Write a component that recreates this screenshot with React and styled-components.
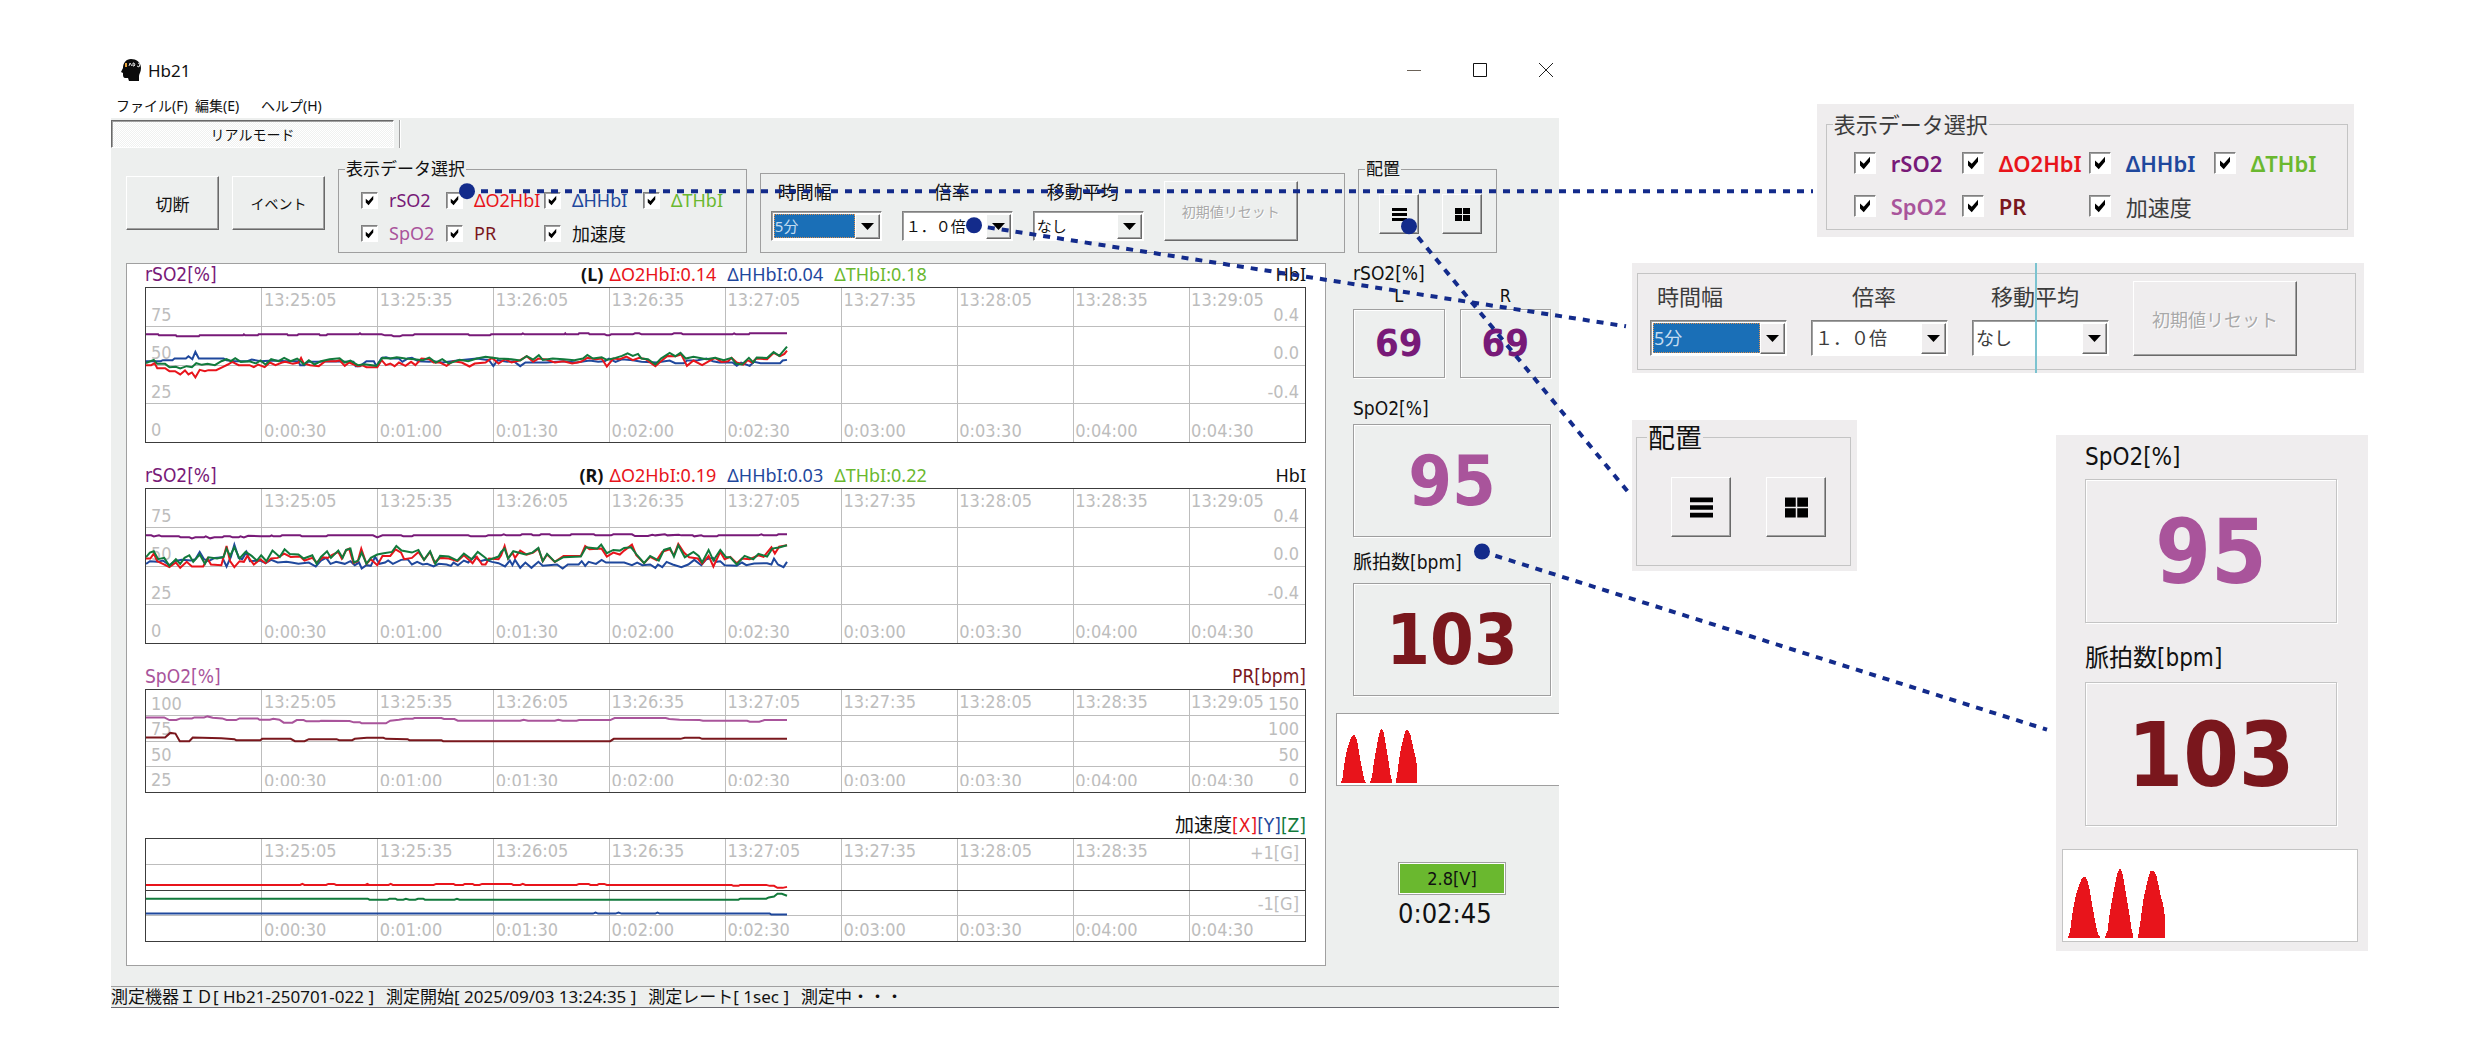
import React from 'react'
import styled, { createGlobalStyle, css, ThemeProvider } from 'styled-components'

const GlobalStyle = createGlobalStyle`
  * {
    box-sizing: border-box;
  }
  body {
    margin: 0;
    background: #fff;
    color: #111;
    font-family: 'Noto Sans', 'Noto Sans CJK JP', sans-serif;
  }
  button, select, input {
    font-family: inherit;
    color: inherit;
    margin: 0;
  }
`

const RED = '#e8141b'
const BLUE = '#1f489d'
const GREEN = '#127a3c'
const LIME = '#6ab82f'
const PURPLE = '#781a78'
const PINK = '#a9549b'
const MAROON = '#7a171d'
const NAVY = '#132b8b'

const figures = css`
  font-family: 'DejaVu Sans Condensed', 'Noto Sans CJK JP', sans-serif;
`

// the same controls are used in the window and, enlarged, in the callouts
const normal = {
  face: '#edefee',
  line: '#9f9f9f',
  ink: '#111',
  text: 18,
  legend: 17,
  legendLine: 20,
  legendLeft: 6,
  row: 24,
  rowGap: 9,
  box: 17,
  labelGap: 11,
  checkCols: '85px 98px 99px auto',
  checkPad: '9px 10px 7px 22px',
  weight: 400,
  framePad: '7px 20px 11px 10px',
  fieldGap: 20,
  labelLine: 20,
  labelSpace: 9,
  selectWidth: 111,
  selectHeight: 30,
  selectText: 15,
  reset: [134, 60, 14],
  placePad: '15px 10px 18px 20px',
  place: 40,
  placeGap: 23,
  glyph: 15,
  reading: 19,
  labelHeight: 46,
  labelTop: 4,
  firstLabel: [46, 14],
  boxHeight: 113,
  value: 70,
  waveMargin: '17px 0 0',
  wave: 73,
  trace: [80, 69],
  readingPad: '0 8px 0 17px',
}

const callout = {
  ...normal,
  face: '#efedee',
  line: '#c4c4c4',
}

const callout125 = {
  ...callout,
  ink: '#3c3c3c',
  text: 22,
  legend: 22,
  row: 30,
  rowGap: 13,
  box: 22,
  labelGap: 15,
  checkCols: '108px 127px 125px auto',
  checkPad: '14px 10px 8px 27px',
  weight: 600,
  framePad: '7px 20px 13px 12px',
  fieldGap: 24,
  labelLine: 24,
  labelSpace: 12,
  selectWidth: 137,
  selectHeight: 36,
  selectText: 18,
  reset: [164, 75, 18],
  reading: 24,
  labelHeight: 59,
  labelTop: 12,
  firstLabel: [44, 0],
  boxHeight: 144,
  value: 89,
  waveMargin: '23px 10px 9px 6px',
  wave: 93,
  trace: [102, 88],
  readingPad: '0 31px 0 29px',
}

const callout150 = {
  ...callout,
  legend: 27,
  legendLine: 27,
  legendLeft: 10,
  placePad: '26px 20px 28px 34px',
  place: 60,
  placeGap: 35,
  glyph: 23,
}

const Page = styled.div`
  position: relative;
  min-height: 100vh;
  display: grid;
  grid-template-columns: 1448fr 736fr;
  align-items: start;
  gap: 73px;
  padding: 48px 113px 44px 111px;
`

const Window = styled.main`
  display: flex;
  flex-direction: column;
`

const TitleBar = styled.header`
  display: flex;
  align-items: center;
  height: 44px;
  padding: 0 6px 0 10px;
`

const Title = styled.h1`
  flex: 1;
  margin: 0 0 0 6px;
  font-size: 17px;
  font-weight: 400;
`

const WindowButtons = styled.div`
  display: flex;
  gap: 52px;
`

const WindowButton = styled.button`
  width: 14px;
  height: 14px;
  padding: 0;
  border: 0;
  background: none;
  svg {
    display: block;
  }
`

const MenuBar = styled.nav`
  display: grid;
  grid-template-columns: 79px 66px auto;
  justify-content: start;
  height: 26px;
  padding-left: 5px;
`

const MenuItem = styled.button`
  padding: 0;
  border: 0;
  background: none;
  font-size: 14px;
  line-height: 28px;
  text-align: left;
  white-space: nowrap;
`

const Body = styled.div`
  background: ${p => p.theme.face};
  border-bottom: 1px solid #6a6a70;
`

const Tabs = styled.div`
  display: flex;
  gap: 5px;
  height: 32px;
  padding: 2px 0;
`

const Tab = styled.button`
  width: 283px;
  padding: 0;
  border: 1px solid;
  border-color: #696969 #fff #fff #696969;
  box-shadow: inset 1px 1px 0 #a0a0a0;
  background: repeating-conic-gradient(#fff 0 25%, #f0f1f0 0 50%) 0 0 / 2px 2px;
  font-size: 14px;
`

const TabDivider = styled.span`
  border-left: 1px solid #a0a0a0;
  border-right: 1px solid #fff;
`

const Toolbar = styled.div`
  display: grid;
  grid-template-columns: 93px 93px 408fr 584fr 139px;
  align-items: end;
  gap: 13px;
  padding: 9px 62px 10px 15px;
`

const raised = css`
  border: 1px solid;
  border-color: #fff #696969 #696969 #fff;
  box-shadow: inset -1px -1px 0 #a0a0a0;
  background: ${p => p.theme.face};
`

const Command = styled.button`
  ${raised}
  height: 54px;
  margin-bottom: 23px;
  padding: 0;
  font-size: ${p => (p.$small ? 14 : 17)}px;
`

const Group = styled.fieldset`
  min-width: 0;
  margin: 0;
  padding: 0;
  border: 1px solid ${p => p.theme.line};
`

const Legend = styled.legend`
  margin-left: ${p => p.theme.legendLeft}px;
  padding: 0 1px;
  color: ${p => p.theme.ink};
  font-size: ${p => p.theme.legend}px;
  line-height: ${p => p.theme.legendLine}px;
  white-space: nowrap;
`

const CheckGrid = styled.div`
  display: grid;
  grid-template-columns: ${p => p.theme.checkCols};
  grid-auto-rows: ${p => p.theme.row}px;
  row-gap: ${p => p.theme.rowGap}px;
  padding: ${p => p.theme.checkPad};
`

const CheckLabel = styled.label`
  display: flex;
  align-items: center;
  gap: ${p => p.theme.labelGap}px;
  color: ${p => p.$color || p.theme.ink};
  font-size: ${p => p.theme.text}px;
  font-weight: ${p => (p.$color ? p.theme.weight : 400)};
  white-space: nowrap;
`

const CheckBox = styled.input`
  appearance: none;
  flex: none;
  width: ${p => p.theme.box}px;
  height: ${p => p.theme.box}px;
  border: 1px solid;
  border-color: #808080 #fff #fff #808080;
  box-shadow: inset 1px 1px 0 #a0a0a0;
  background: #fff;
  &:checked {
    background: #fff url("data:image/svg+xml,%3Csvg xmlns='http://www.w3.org/2000/svg' viewBox='0 0 16 16'%3E%3Cpath d='M4 6v4l3 3 5-6V3L7 8.500z'/%3E%3C/svg%3E") center / 100% no-repeat;
  }
`

const Frame = styled.section`
  display: flex;
  align-items: flex-end;
  gap: ${p => p.theme.fieldGap}px;
  padding: ${p => p.theme.framePad};
  border: 1px solid ${p => p.theme.line};
`

const Field = styled.div`
  display: flex;
  flex-direction: column;
  gap: ${p => p.theme.labelSpace}px;
  width: ${p => p.theme.selectWidth}px;
`

const FieldLabel = styled.label`
  padding: 0 18px 0 7px;
  color: ${p => p.theme.ink};
  font-size: ${p => p.theme.text}px;
  line-height: ${p => p.theme.labelLine}px;
  text-align: ${p => p.$align || 'center'};
  white-space: nowrap;
`

const SelectBox = styled.div`
  position: relative;
  height: ${p => p.theme.selectHeight}px;
  border: 1px solid;
  border-color: #808080 #fff #fff #808080;
  box-shadow: inset 1px 1px 0 #a0a0a0;
  background: #fff;
  padding: 2px 26px 2px 2px;
`

const Select = styled.select`
  appearance: none;
  width: 100%;
  height: 100%;
  padding: 0 0 0 1px;
  border: 0;
  border-radius: 0;
  background: ${p => (p.$active ? '#1a6fb7' : 'transparent')};
  color: ${p => (p.$active ? '#c4dcf0' : p.theme.ink)};
  outline: ${p => (p.$active ? '1px dotted #d98e4f' : 'none')};
  outline-offset: -1px;
  font-size: ${p => p.theme.selectText}px;
`

const SelectArrow = styled.span`
  ${raised}
  position: absolute;
  top: 2px;
  right: 1px;
  bottom: 1px;
  width: 25px;
  display: grid;
  place-items: center;
  pointer-events: none;
`

const ResetButton = styled.button`
  ${raised}
  width: ${p => p.theme.reset[0]}px;
  height: ${p => p.theme.reset[1]}px;
  padding: 0;
  color: #a9a9a9;
  font-size: ${p => p.theme.reset[2]}px;
  text-shadow: 1px 1px 0 #fff;
  white-space: nowrap;
`

const Placement = styled.div`
  display: flex;
  gap: ${p => p.theme.placeGap}px;
  padding: ${p => p.theme.placePad};
`

const PlaceButton = styled.button`
  ${raised}
  display: grid;
  place-items: center;
  width: ${p => p.theme.place}px;
  height: ${p => p.theme.place}px;
  padding: 0;
  svg {
    width: ${p => p.theme.glyph}px;
    height: ${p => p.theme.glyph}px;
  }
`

const Content = styled.div`
  display: grid;
  grid-template-columns: 1200fr 223fr;
  align-items: start;
  gap: 10px;
  padding-left: 15px;
`

const Charts = styled.section`
  display: flex;
  flex-direction: column;
  gap: 22px;
  padding: 0 19px 23px 18px;
  background: #fff;
  border: 1px solid #a0a0a0;
`

const ChartHead = styled.div`
  display: flex;
  height: 23px;
  font-size: 18px;
  line-height: 21px;
  white-space: nowrap;
`

const HeadLeft = styled.div`
  display: flex;
  justify-content: space-between;
  width: 40%;
  padding-right: 6px;
`

const HeadValues = styled.div`
  display: flex;
  flex: 1;
  gap: 11px;
`

const Ink = styled.span`
  color: ${p => p.$color};
`

const Unit = styled(Ink)`
  ${figures}
  font-size: 19px;
`

const Plot = styled.div`
  ${figures}
  position: relative;
  height: ${p => p.$height}px;
  border: 1px solid #3c3c3c;
  color: #bdbdbd;
  font-size: 18px;
  line-height: 22px;
  white-space: nowrap;
`

const Trace = styled.svg`
  position: absolute;
  inset: 0;
  width: 100%;
  height: 100%;
`

const Times = styled.div`
  position: absolute;
  inset: 0;
  display: grid;
  grid-template-columns: repeat(10, 1fr);
  align-content: space-between;
  padding-top: 1px;
  clip-path: ${p => (p.$clip ? 'inset(0 0 6px)' : 'none')};
`

const Time = styled.span`
  min-width: 0;
  padding-left: 2px;
`

const Scale = styled.div`
  position: absolute;
  inset: 0;
  display: grid;
  grid-auto-rows: 1fr;
  clip-path: ${p => (p.$clip ? 'inset(0 0 6px)' : 'none')};
`

const ScaleRow = styled.div`
  display: flex;
  justify-content: space-between;
  align-items: flex-end;
  padding: 0 6px 1px 5px;
`

const Side = styled.aside`
  font-size: 18px;
`

const Pair = styled.div`
  ${figures}
  display: grid;
  grid-template-columns: 1fr 1fr;
  gap: 3px 15px;
  padding: 0 8px 0 17px;
  line-height: 20px;
`

const PairTitle = styled.div`
  grid-column: span 2;
  font-size: 19px;
`

const PairName = styled.div`
  text-align: center;
`

const sunken = css`
  border: 1px solid ${p => p.theme.line};
  box-shadow: inset 1px 1px 0 #fff, 1px 1px 0 #fff;
`

const PairBox = styled.output`
  ${sunken}
  color: ${PURPLE};
  font-size: 38px;
  font-weight: 700;
  line-height: 67px;
  text-align: center;
`

const Readings = styled.div`
  ${figures}
  padding: ${p => p.theme.readingPad};
`

const ReadingLabel = styled.div`
  height: ${p => p.theme.labelHeight}px;
  padding-top: ${p => p.theme.labelTop}px;
  font-size: ${p => p.theme.reading}px;
  line-height: ${p => p.theme.labelHeight - p.theme.labelTop}px;
  &:first-child {
    height: ${p => p.theme.firstLabel[0]}px;
    padding-top: ${p => p.theme.firstLabel[1]}px;
    line-height: ${p => p.theme.firstLabel[0] - p.theme.firstLabel[1]}px;
  }
`

const ReadingBox = styled.output`
  ${sunken}
  display: block;
  height: ${p => p.theme.boxHeight}px;
  color: ${p => p.$color};
  font-size: ${p => p.theme.value}px;
  font-weight: 700;
  line-height: ${p => p.theme.boxHeight}px;
  text-align: center;
`

const WaveBox = styled.div`
  height: ${p => p.theme.wave}px;
  margin: ${p => p.theme.waveMargin};
  border: 1px solid ${p => p.theme.line};
  border-right-width: ${p => (p.$open ? 0 : 1)}px;
  background: #fff;
  svg {
    display: block;
    width: ${p => p.theme.trace[0]}px;
    height: ${p => p.theme.trace[1]}px;
  }
`

const Battery = styled.div`
  width: 108px;
  margin: 76px auto 0;
`

const Voltage = styled.div`
  border: 1px solid #a0a0a0;
  box-shadow: inset 0 0 0 1px #fff;
  background: ${LIME};
  line-height: 31px;
  text-align: center;
`

const Elapsed = styled.div`
  font-size: 27px;
  line-height: 38px;
`

const StatusBar = styled.footer`
  display: flex;
  gap: 12px;
  height: 21px;
  margin-top: 20px;
  border-top: 1px solid #a0a0a0;
  font-size: 17px;
  line-height: 20px;
  white-space: nowrap;
`

const Callouts = styled.div`
  display: flex;
  flex-direction: column;
  align-items: flex-start;
  padding-top: 56px;
`

const Callout = styled.section`
  position: relative;
  background: ${p => p.theme.face};
`

const CheckCallout = styled(Callout)`
  align-self: flex-end;
  width: 73%;
  margin-right: 14px;
  padding: 10px 6px 7px 9px;
`

const RangeCallout = styled(Callout)`
  align-self: stretch;
  margin: 26px 4px 0 0;
  padding: 10px 8px 3px 5px;
`

// thin guide that crosses the range callout
const Guide = styled.span`
  position: absolute;
  top: 0;
  bottom: 0;
  left: 55%;
  width: 2px;
  background: #7cc3d0;
`

const CalloutRow = styled.div`
  display: flex;
  justify-content: space-between;
  align-items: flex-start;
  width: 100%;
  padding-top: 47px;
`

const PlaceCallout = styled(Callout)`
  width: 225px;
  padding: 4px 6px 5px 4px;
`

const ReadingCallout = styled(Callout)`
  display: flow-root;
  width: 312px;
  margin-top: 15px;
`

const Connectors = styled.svg`
  position: absolute;
  inset: 0;
  width: 100%;
  height: 100%;
  pointer-events: none;
`

const checks = [
  ['rSO2', PURPLE],
  ['ΔO2HbI', RED],
  ['ΔHHbI', BLUE],
  ['ΔTHbI', LIME],
  ['SpO2', PINK],
  ['PR', MAROON],
  ['加速度'],
]

const DataSelect = ({ id }) => (
  <Group>
    <Legend>表示データ選択</Legend>
    <CheckGrid>
      {checks.map(([name, color], i) => (
        <CheckLabel key={name} $color={color} htmlFor={`${id}-${i}`}>
          <CheckBox type="checkbox" id={`${id}-${i}`} defaultChecked />
          {name}
        </CheckLabel>
      ))}
    </CheckGrid>
  </Group>
)

const DropDown = ({ id, label, value, align, active }) => (
  <Field>
    <FieldLabel htmlFor={id} $align={align}>{label}</FieldLabel>
    <SelectBox>
      <Select id={id} $active={active} defaultValue={value}>
        <option>{value}</option>
      </Select>
      <SelectArrow>
        <svg width="13" height="7" viewBox="0 0 13 7"><path d="M0 0h13L6.500 7z" /></svg>
      </SelectArrow>
    </SelectBox>
  </Field>
)

const RangeSelect = ({ id }) => (
  <Frame>
    <DropDown id={`${id}-width`} label="時間幅" value="5分" align="left" active />
    <DropDown id={`${id}-zoom`} label="倍率" value="１．０倍" />
    <DropDown id={`${id}-average`} label="移動平均" value="なし" />
    <ResetButton disabled>初期値リセット</ResetButton>
  </Frame>
)

const PlaceSelect = () => (
  <Group>
    <Legend>配置</Legend>
    <Placement>
      <PlaceButton aria-label="縦に並べる">
        <svg viewBox="0 0 15 15"><path d="M0 1h15v3H0zM0 6h15v3H0zM0 11h15v3H0z" /></svg>
      </PlaceButton>
      <PlaceButton aria-label="格子に並べる">
        <svg viewBox="0 0 15 15"><path d="M0 1h7v6H0zM8 1h7v6H8zM0 8h7v6H0zM8 8h7v6H8z" /></svg>
      </PlaceButton>
    </Placement>
  </Group>
)

const Vitals = ({ open }) => (
  <>
    <Readings>
      <ReadingLabel>SpO2[%]</ReadingLabel>
      <ReadingBox $color={PINK}>95</ReadingBox>
      <ReadingLabel>脈拍数[bpm]</ReadingLabel>
      <ReadingBox $color={MAROON}>103</ReadingBox>
    </Readings>
    <WaveBox $open={open}>
      <svg viewBox="52 918 240 190" preserveAspectRatio="none" fill={RED} shapeRendering="crispEdges">
        <path d="M63 1108l6-16 4-30 5-28 5-20 6-18 6-14 4-5h6l5 8 5 20 5 28 5 26 6 28 4 14 6 7z" />
        <path d="M150 1108l7-16 4-30 5-28 5-26 5-24 5-18 3-6h4l5 12 5 28 5 28 5 28 5 32 5 20z" />
        <path d="M228 1108l6-34 4-30 5-28 5-20 6-22 4-11h8l6 12 5 20 6 26 5 16 3 20v51z" />
      </svg>
    </WaveBox>
  </>
)

const times = ['', '13:25:05', '13:25:35', '13:26:05', '13:26:35', '13:27:05', '13:27:35', '13:28:05', '13:28:35', '13:29:05']
const elapsed = ['', '0:00:30', '0:01:00', '0:01:30', '0:02:00', '0:02:30', '0:03:00', '0:03:30', '0:04:00', '0:04:30']

// plot units: 267.6 across for 30 seconds, 3 down for one pixel
const charts = [
  {
    key: 'left',
    title: ['rSO2[%]', PURPLE],
    side: '(L)',
    values: [['ΔO2HbI:0.14', RED], ['ΔHHbI:0.04', BLUE], ['ΔTHbI:0.18', LIME]],
    index: 'HbI',
    units: [],
    height: 156,
    scale: [['75', '0.4'], ['50', '0.0'], ['25', '-0.4'], ['0', '']],
    top: 97,
    series: [
      [PURPLE, '36,237 64,237 66,240 105,240 107,243 158,243 160,240 260,240 262,237 265,240 294,240 296,237 362,237 364,240 385,240 388,237 436,237 438,240 452,240 455,237 527,237 530,234 533,237 580,237 588,240 603,240 608,243 622,243 628,240 652,240 656,237 780,237 783,240 830,240 833,237 903,237 906,234 910,237 1002,237 1004,234 1006,237 1034,237 1036,234 1058,234 1060,237 1095,237 1100,240 1106,240 1110,237 1160,237 1165,234 1175,234 1180,237 1250,237 1255,234 1272,234 1276,237 1390,237 1394,234 1398,237 1428,237 1430,234 1516,234'],
      [BLUE, '36,318 70,318 75,315 97,315 102,310 128,310 134,303 143,312 150,290 158,310 215,310 222,315 240,318 270,318 280,313 300,318 330,316 360,318 388,318 392,330 402,330 410,320 430,320 470,318 500,320 515,320 520,333 530,333 545,318 562,318 568,333 580,308 590,306 600,310 620,310 628,320 640,310 650,308 665,318 690,320 700,318 720,322 760,315 800,310 828,315 838,333 848,315 870,320 885,318 900,333 912,322 930,322 960,322 1000,318 1030,322 1060,316 1080,320 1095,318 1105,310 1120,320 1135,312 1160,315 1180,320 1215,322 1245,316 1258,324 1278,324 1285,316 1310,315 1330,310 1345,318 1360,322 1390,322 1400,332 1410,322 1430,332 1440,320 1455,324 1500,324 1506,316 1516,314'],
      [RED, '36,330 48,330 56,324 62,339 80,339 90,348 103,348 115,358 126,346 134,358 142,352 150,367 160,344 172,348 180,345 198,345 214,335 225,328 235,320 250,330 275,330 285,336 295,328 310,336 322,322 335,330 350,322 358,320 375,326 388,322 394,308 400,325 415,330 435,333 450,318 475,318 483,315 495,332 505,322 525,333 535,330 545,336 570,336 580,315 590,330 600,325 610,333 620,322 635,332 648,320 658,330 672,310 690,312 700,322 715,322 730,332 745,318 765,322 783,334 795,325 820,322 835,308 850,325 865,312 880,322 900,315 915,303 930,320 942,310 960,313 980,322 1000,318 1020,325 1040,320 1055,308 1075,312 1088,310 1100,334 1115,310 1130,312 1145,304 1160,315 1175,308 1190,312 1200,322 1212,333 1225,318 1240,302 1258,303 1272,298 1285,332 1300,316 1320,330 1340,315 1350,308 1365,320 1380,318 1388,308 1400,322 1415,328 1425,315 1435,322 1445,310 1470,312 1485,293 1500,303 1510,296 1516,286'],
      [GREEN, '36,324 54,314 62,326 80,326 90,336 105,335 115,340 130,333 142,336 152,324 165,329 178,326 195,330 210,318 222,312 232,318 242,309 255,320 275,318 290,325 300,316 312,328 325,312 342,318 355,308 370,318 385,310 393,318 400,328 412,315 425,328 440,318 460,312 483,309 495,322 508,316 525,330 540,327 568,332 582,308 600,310 615,306 635,310 655,312 675,315 690,307 705,322 720,312 735,325 760,314 780,318 800,310 820,305 850,310 880,312 900,316 915,303 930,313 943,300 952,314 975,310 1000,312 1025,315 1045,310 1055,299 1068,310 1088,306 1100,314 1120,308 1135,302 1148,294 1160,302 1172,296 1180,310 1195,312 1212,328 1225,310 1245,293 1258,303 1270,293 1282,310 1300,305 1330,312 1350,308 1370,315 1388,308 1398,325 1412,328 1428,308 1438,322 1446,307 1470,308 1485,290 1498,302 1516,274'],
    ],
  },
  {
    key: 'right',
    title: ['rSO2[%]', PURPLE],
    side: '(R)',
    values: [['ΔO2HbI:0.19', RED], ['ΔHHbI:0.03', BLUE], ['ΔTHbI:0.22', LIME]],
    index: 'HbI',
    units: [],
    height: 156,
    scale: [['75', '0.4'], ['50', '0.0'], ['25', '-0.4'], ['0', '']],
    top: 100,
    series: [
      [PURPLE, '36,240 48,240 54,243 66,240 72,243 112,243 116,246 136,246 142,249 150,246 170,246 174,243 184,249 194,246 212,246 216,243 230,243 236,246 250,246 254,243 262,246 272,241 300,243 322,243 326,240 330,243 346,243 350,240 392,240 396,243 452,243 456,240 560,240 570,246 582,240 625,240 630,243 650,243 654,240 780,240 786,243 820,243 826,240 856,240 862,237 868,240 900,240 904,237 926,237 930,240 944,240 948,237 968,237 972,240 1015,240 1018,237 1070,237 1074,240 1110,240 1115,237 1158,237 1165,242 1195,242 1205,238 1212,240 1234,237 1240,240 1266,238 1272,240 1298,240 1302,243 1318,240 1324,243 1354,243 1358,240 1450,240 1457,237 1462,240 1492,240 1496,237 1516,237'],
      [BLUE, '36,326 45,318 62,320 75,316 90,330 102,318 118,314 140,316 150,312 160,290 170,312 180,318 195,308 212,306 222,334 232,305 240,268 250,308 258,312 268,290 276,318 300,316 312,324 325,314 340,322 360,320 372,322 388,326 412,322 428,334 440,316 452,308 462,326 475,320 495,326 508,318 518,330 528,322 534,340 545,330 555,332 565,305 575,326 588,322 595,316 606,326 625,314 640,312 650,328 662,320 675,328 685,326 700,334 712,326 730,328 740,332 746,322 756,330 770,316 780,322 795,304 808,318 820,314 835,320 850,324 865,334 876,316 882,330 888,314 900,338 912,322 926,338 942,320 952,332 985,328 998,340 1010,328 1035,328 1042,318 1050,332 1058,320 1075,326 1088,314 1098,322 1140,322 1158,330 1170,322 1182,330 1200,328 1212,338 1218,328 1228,336 1238,320 1252,328 1272,336 1288,328 1302,314 1318,330 1330,312 1345,308 1352,320 1362,318 1372,330 1400,332 1412,322 1422,330 1440,325 1470,324 1480,328 1486,310 1495,328 1508,336 1516,320'],
      [RED, '36,310 46,310 54,295 62,318 75,326 90,336 105,322 115,338 130,320 142,334 168,334 178,310 186,328 210,330 222,272 230,318 240,336 252,318 262,320 270,302 285,328 300,312 312,324 325,310 340,308 355,295 370,305 392,304 402,316 420,308 430,322 445,306 456,308 465,300 480,290 488,310 498,285 505,280 515,324 525,318 533,280 545,326 555,312 570,330 582,302 600,302 612,282 625,292 632,312 650,308 665,290 678,314 692,290 702,322 715,308 735,310 755,318 770,300 790,324 800,305 812,328 820,328 828,310 850,312 856,300 864,272 872,310 882,292 888,308 900,286 915,298 930,292 942,280 952,318 962,298 980,320 1000,302 1040,302 1050,272 1060,282 1088,280 1100,304 1115,292 1130,298 1140,286 1158,268 1168,300 1186,324 1200,305 1215,315 1228,290 1245,282 1255,300 1265,266 1278,292 1290,306 1310,310 1320,326 1335,302 1346,334 1362,290 1372,312 1385,305 1400,324 1412,310 1430,312 1450,300 1462,305 1480,276 1488,295 1498,274 1516,270'],
      [GREEN, '36,306 45,292 54,288 64,312 78,308 90,332 105,312 115,326 125,308 136,300 145,320 160,298 172,326 180,306 200,310 215,305 222,280 230,302 240,276 252,310 266,290 280,302 292,316 302,300 314,318 328,286 345,305 356,282 368,296 388,298 400,310 420,300 430,326 440,305 454,288 463,308 480,286 490,308 498,284 508,280 516,322 526,316 534,292 545,326 555,308 570,298 585,294 604,290 614,272 626,286 650,292 665,284 678,314 692,288 704,326 715,302 735,304 755,316 770,295 788,312 802,290 818,306 826,315 850,304 856,290 864,280 872,310 884,288 912,298 928,292 942,278 952,318 962,296 980,320 1000,306 1040,304 1052,276 1078,280 1087,268 1100,294 1115,284 1130,286 1140,278 1156,276 1170,300 1186,324 1200,302 1220,316 1232,284 1246,278 1255,304 1265,270 1280,306 1300,290 1312,302 1320,322 1335,284 1346,316 1362,284 1375,306 1385,306 1400,328 1418,302 1438,312 1450,296 1470,304 1482,280 1500,276 1516,270'],
    ],
  },
  {
    key: 'pulse',
    title: ['SpO2[%]', PINK],
    values: [],
    units: [['PR[bpm]', MAROON]],
    height: 104,
    clip: true,
    scale: [['100', '150'], ['75', '100'], ['50', '50'], ['25', '0']],
    top: 100,
    series: [
      [PINK, '36,183 78,183 90,191 106,191 116,186 142,186 148,183 170,183 178,180 190,184 212,186 222,191 244,191 252,186 294,186 298,190 322,190 330,187 344,190 354,199 374,199 384,191 400,191 406,195 436,195 440,193 506,194 516,198 530,198 534,201 590,201 600,193 620,190 634,187 652,187 656,185 718,185 724,188 748,188 756,193 900,193 908,190 918,193 980,193 988,190 998,193 1030,193 1036,191 1108,191 1118,185 1236,185 1244,188 1268,190 1314,191 1322,193 1424,193 1430,196 1452,196 1464,191 1516,191'],
      [MAROON, '36,244 80,244 92,230 104,232 114,255 136,255 144,244 210,246 240,249 244,252 300,252 304,248 370,248 380,255 402,255 412,249 476,249 482,252 512,252 518,248 546,245 584,245 590,248 640,249 644,252 718,252 722,255 1108,255 1116,248 1270,248 1280,245 1314,245 1320,248 1516,248'],
    ],
  },
  {
    key: 'motion',
    title: ['', '#111'],
    values: [],
    units: [['加速度', '#111'], ['[X]', RED], ['[Y]', BLUE], ['[Z]', GREEN]],
    height: 104,
    zero: true,
    lastTime: 8,
    scale: [['', '+1[G]'], ['', ''], ['', '-1[G]'], ['', '']],
    top: 545,
    series: [
      [RED, '36,684 392,684 397,681 402,684 452,684 457,681 470,681 475,684 543,684 547,681 551,684 596,684 601,681 606,684 700,684 706,681 746,681 750,684 768,684 772,681 790,681 794,684 806,684 812,681 880,681 884,684 900,684 906,681 912,684 1030,684 1036,681 1058,681 1062,684 1078,684 1082,681 1094,681 1100,684 1388,684 1392,687 1404,687 1408,684 1468,684 1476,687 1486,687 1494,693 1506,693 1516,690'],
      [GREEN, '36,726 548,726 552,729 594,729 598,726 612,726 616,729 630,729 636,726 644,729 658,729 664,726 676,726 680,729 748,729 754,726 760,729 1404,729 1408,726 1468,726 1474,722 1486,719 1494,711 1504,711 1516,717'],
      [BLUE, '36,771 1068,771 1074,768 1080,771 1120,771 1127,768 1134,771 1212,771 1217,768 1222,771 1476,771 1480,774 1516,774'],
    ],
  },
]

const Chart = ({ title, side, values, index, units, height, clip, zero, lastTime = 9, scale, top, series }) => {
  const depth = (height - 1) * 3
  return (
    <div>
      <ChartHead>
        <HeadLeft>
          <Unit $color={title[1]}>{title[0]}</Unit>
          {side && <b>{side}</b>}
        </HeadLeft>
        <HeadValues>
          {values.map(([text, color]) => <Ink key={text} $color={color}>{text}</Ink>)}
        </HeadValues>
        {index}
        {units.map(([text, color]) => <Unit key={text} $color={color}>{text}</Unit>)}
      </ChartHead>
      <Plot $height={height}>
        <Times $clip={clip}>
          {times.map((t, i) => <Time key={i}>{i > lastTime ? '' : t}</Time>)}
          {elapsed.map((t, i) => <Time key={i}>{t}</Time>)}
        </Times>
        <Scale $clip={clip}>
          {scale.map(([l, r], i) => (
            <ScaleRow key={i}><span>{l}</span><span>{r}</span></ScaleRow>
          ))}
        </Scale>
        <Trace viewBox={`36 ${top} 2676 ${depth}`} preserveAspectRatio="none" fill="none">
          <g stroke="#bdbdbd" shapeRendering="crispEdges">
            {elapsed.slice(1).map((t, i) => {
              const x = 36 + 267.6 * (i + 1)
              return <line key={t} x1={x} x2={x} y1={top} y2={top + depth} vectorEffect="non-scaling-stroke" />
            })}
            {[1, 2, 3].map(i => {
              const y = top + (depth * i) / 4
              return (
                <line key={i} x1="36" x2="2712" y1={y} y2={y} stroke={zero && i === 2 ? '#3c3c3c' : undefined} vectorEffect="non-scaling-stroke" />
              )
            })}
          </g>
          {series.map(([color, points]) => (
            <polyline key={color} points={points} stroke={color} strokeWidth="2" vectorEffect="non-scaling-stroke" />
          ))}
        </Trace>
      </Plot>
    </div>
  )
}

const HeadIcon = () => (
  <svg width="21" height="23" viewBox="0 0 21 23">
    <path d="M10 0C15 0 20 3 20 9c0 4-2 6-2 8v5H8l-1-3H4c-1 0-2-1-2-3v-2l-2-1 2-4C2 4 5 0 10 0z" fill="#0b0b0b" />
    <path d="M4 4h2v4H4z" fill="#e8a33a" />
    <path d="M8 7l1-3 2 3M12 4v3h1l1-1-1-2zM17 4l2 1-1 3-2-1" fill="none" stroke="#ddd" />
  </svg>
)

const links = [
  [467, 191, 1813, 191],
  [974, 225, 1626, 326],
  [1409, 226, 1631, 495],
  [1482, 551, 2047, 729],
]

export default function App() {
  return (
    <ThemeProvider theme={normal}>
      <GlobalStyle />
      <Page>
        <Window>
          <TitleBar>
            <HeadIcon />
            <Title>Hb21</Title>
            <WindowButtons>
              <WindowButton aria-label="最小化">
                <svg width="14" height="14"><path d="M0 7.500h14" stroke="#6b6258" /></svg>
              </WindowButton>
              <WindowButton aria-label="最大化">
                <svg width="14" height="14"><path d="M.5.5h13v13H.5z" fill="none" stroke="#111" /></svg>
              </WindowButton>
              <WindowButton aria-label="閉じる">
                <svg width="14" height="14"><path d="M0 0l14 14M14 0L0 14" stroke="#222" /></svg>
              </WindowButton>
            </WindowButtons>
          </TitleBar>
          <MenuBar>
            <MenuItem>ファイル(F)</MenuItem>
            <MenuItem>編集(E)</MenuItem>
            <MenuItem>ヘルプ(H)</MenuItem>
          </MenuBar>
          <Body>
            <Tabs>
              <Tab>リアルモード</Tab>
              <TabDivider />
            </Tabs>
            <Toolbar>
              <Command>切断</Command>
              <Command $small>イベント</Command>
              <DataSelect id="data" />
              <RangeSelect id="range" />
              <PlaceSelect />
            </Toolbar>
            <Content>
              <Charts>
                {charts.map(({ key, ...chart }) => <Chart key={key} {...chart} />)}
              </Charts>
              <Side>
                <Pair>
                  <PairTitle>rSO2[%]</PairTitle>
                  <PairName>L</PairName>
                  <PairName>R</PairName>
                  <PairBox>69</PairBox>
                  <PairBox>69</PairBox>
                </Pair>
                <Vitals open />
                <Readings>
                  <Battery>
                    <Voltage>2.8[V]</Voltage>
                    <Elapsed>0:02:45</Elapsed>
                  </Battery>
                </Readings>
              </Side>
            </Content>
            <StatusBar>
              <span>測定機器ＩＤ[ Hb21-250701-022 ]</span>
              <span>測定開始[ 2025/09/03 13:24:35 ]</span>
              <span>測定レート[ 1sec ]</span>
              <span>測定中・・・</span>
            </StatusBar>
          </Body>
        </Window>
        <Callouts>
          <ThemeProvider theme={callout125}>
            <CheckCallout>
              <DataSelect id="data-large" />
            </CheckCallout>
            <RangeCallout>
              <RangeSelect id="range-large" />
              <Guide />
            </RangeCallout>
          </ThemeProvider>
          <CalloutRow>
            <ThemeProvider theme={callout150}>
              <PlaceCallout>
                <PlaceSelect />
              </PlaceCallout>
            </ThemeProvider>
            <ThemeProvider theme={callout125}>
              <ReadingCallout>
                <Vitals />
              </ReadingCallout>
            </ThemeProvider>
          </CalloutRow>
        </Callouts>
        <Connectors viewBox="0 0 2481 1051" preserveAspectRatio="none" fill={NAVY}>
          {links.map(([x1, y1, x2, y2]) => (
            <g key={y2}>
              <line x1={x1} y1={y1} x2={x2} y2={y2} stroke={NAVY} strokeWidth="4" strokeDasharray="7 7" />
              <circle cx={x1} cy={y1} r="8" />
            </g>
          ))}
        </Connectors>
      </Page>
    </ThemeProvider>
  )
}
